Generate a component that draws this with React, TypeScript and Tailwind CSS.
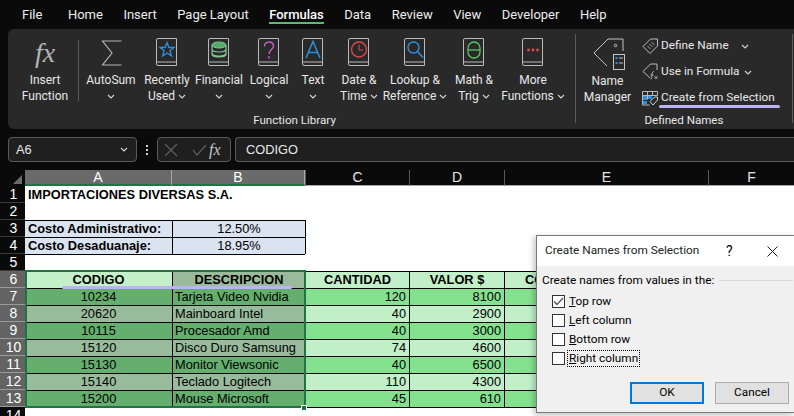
import type { ReactNode } from 'react';

const ui = 'font-["Roboto","Noto_Sans",sans-serif]';
const sheetFont = 'font-["Liberation_Sans",Arial,sans-serif]';

const tabs = ['Home', 'Insert', 'Page Layout', 'Formulas', 'Data', 'Review', 'View', 'Developer', 'Help'];

function Chevron({ className = '' }: { className?: string }) {
  return (
    <svg width="8" height="5" viewBox="0 0 8 5" className={className} fill="none" stroke="#d6d6d6" strokeWidth="1.1">
      <path d="M1 1l3 3 3-3" />
    </svg>
  );
}

function Book({ children }: { children: ReactNode }) {
  return (
    <svg width="22" height="29" viewBox="0 0 22 29" fill="none">
      <path d="M2 .5h18.500v27H2A1.500 1.500 0 0 1 .5 26V2A1.500 1.500 0 0 1 2 .5zM.8 24h19.700" stroke="#b9b9b9" />
      {children}
    </svg>
  );
}

const bookIcons: Record<string, ReactNode> = {
  recent: <path d="M11 4.500l1.900 5h5.100l-4.100 3.300 1.500 5.200-4.400-3-4.400 3 1.500-5.200L4 9.500h5.100z" stroke="#2f8fdc" strokeWidth="1.300" />,
  financial: (
    <>
      <ellipse cx="11" cy="7" rx="7" ry="3" fill="#55a868" stroke="#7fc98f" />
      <path d="M4 7v9c0 1.700 3 3 7 3s7-1.300 7-3V7M4 11c0 1.700 3 3 7 3s7-1.300 7-3M4 15c0 1.700 3 3 7 3s7-1.300 7-3" stroke="#7fc98f" strokeWidth="1.200" />
    </>
  ),
  logical: <path d="M6.500 8.500c0-6 9-6 9-.5 0 3.500-4.500 3.500-4.500 8M11 18v2.500" stroke="#c85fc8" strokeWidth="1.400" />,
  text: <path d="M4 20L11 3.500 18 20M6.500 14.500h9" stroke="#2f8fdc" strokeWidth="1.500" />,
  date: (
    <>
      <circle cx="11" cy="11.500" r="7.500" stroke="#e0494f" strokeWidth="1.300" />
      <path d="M11 6.500v5.500h4" stroke="#e0494f" />
    </>
  ),
  lookup: (
    <>
      <circle cx="9.500" cy="9.500" r="5.500" stroke="#2f8fdc" strokeWidth="1.400" />
      <path d="M13.500 13.500l5.500 6" stroke="#2f8fdc" strokeWidth="1.500" />
    </>
  ),
  math: (
    <>
      <rect x="5" y="4" width="12" height="16" rx="6" stroke="#58c468" strokeWidth="1.300" />
      <path d="M5 12h12" stroke="#58c468" strokeWidth="1.300" />
    </>
  ),
  more: (
    <>
      <circle cx="6.500" cy="12" r="1.400" fill="#e0494f" />
      <circle cx="11" cy="12" r="1.400" fill="#e0494f" />
      <circle cx="15.500" cy="12" r="1.400" fill="#e0494f" />
    </>
  ),
};

function RibbonButton({ width, icon, lines, caret }: { width: string; icon: ReactNode; lines: string[]; caret?: boolean }) {
  return (
    <div className={`${width} flex flex-col items-center text-[12px] leading-[16px] text-[#e8e8e8]`}>
      <div className="h-[29px] flex items-center justify-center">{icon}</div>
      <div className="mt-[5px] whitespace-nowrap">{lines[0]}</div>
      <div className="h-[16px] flex items-center gap-[3px] whitespace-nowrap">
        {lines[1]}
        {caret && <Chevron />}
      </div>
    </div>
  );
}

function TagIcon() {
  return (
    <svg width="17" height="17" viewBox="0 0 17 17" fill="none" stroke="#bdbdbd">
      <path d="M1 8.500L8.500 1H15.500V8L8 15.500z" />
      <path d="M5.500 8l3 3M7.500 6l3 3M9.500 4l3 3" strokeWidth=".8" />
    </svg>
  );
}

function FormulaTagIcon() {
  return (
    <svg width="17" height="18" viewBox="0 0 17 18" fill="none" stroke="#bdbdbd">
      <path d="M8 15L1 8.500 8.500 1H15V7" />
      <path d="M12.500 1.500v.01" />
      <path d="M8.500 16c1.500 0 1-1 1.500-5 .3-2 1-2.500 2-2.500M8.500 12h3M12.500 13l3 3M15.500 13l-3 3" strokeWidth=".9" />
    </svg>
  );
}

function SelectionIcon() {
  return (
    <svg width="16" height="15" viewBox="0 0 16 15" fill="none">
      <path d="M.5.5h15v4H.5zM.5 4.500v9.500h7" stroke="#b9b9b9" />
      <path d="M5.500.5v8M10.500.5v4" stroke="#b9b9b9" />
      <path d="M1 5h4v4H1z M1 10h4v3.500H1z M6 5h4v3H6z" fill="#2f8fdc" />
      <path d="M8 10.500L12.500 6h3v3L11 14z" fill="#292929" stroke="#d0d0d0" />
    </svg>
  );
}

function SmallCommand({ icon, children }: { icon: ReactNode; children: ReactNode }) {
  return (
    <div className="h-[26px] flex items-center">
      <div className="w-[22px] flex justify-center">{icon}</div>
      <div className="flex items-center text-[#e8e8e8] text-[11.800px] whitespace-nowrap">{children}</div>
    </div>
  );
}

function Ribbon() {
  return (
    <div className={`${ui} ml-[8px] h-[100px] rounded-l-[6px] bg-[#292929] flex pl-[6px]`}>
      <div className="w-[561px] flex flex-col">
        <div className="flex pt-[9px] h-[83px]">
          <RibbonButton
            width="w-[62px]"
            lines={['Insert', 'Function']}
            icon={<span className='font-["Liberation_Serif",serif] italic text-[28px] leading-none text-[#b4b4b4]'>fx</span>}
          />
          <div className="ml-[2px] mr-[5px] mt-[2px] w-px h-[61px] bg-[#5c5c5c]" />
          <RibbonButton
            width="w-[54px]"
            lines={['AutoSum', '']}
            caret
            icon={
              <svg width="21" height="26" viewBox="0 0 21 26" fill="none" stroke="#b4b4b4" strokeWidth="1.200">
                <path d="M20.500 1H1.500L11 13 1.500 25h19" />
              </svg>
            }
          />
          <RibbonButton width="w-[58px]" lines={['Recently', 'Used']} caret icon={<Book>{bookIcons.recent}</Book>} />
          <RibbonButton width="w-[46px]" lines={['Financial', '']} caret icon={<Book>{bookIcons.financial}</Book>} />
          <RibbonButton width="w-[54px]" lines={['Logical', '']} caret icon={<Book>{bookIcons.logical}</Book>} />
          <RibbonButton width="w-[34px]" lines={['Text', '']} caret icon={<Book>{bookIcons.text}</Book>} />
          <RibbonButton width="w-[58px]" lines={['Date &', 'Time']} caret icon={<Book>{bookIcons.date}</Book>} />
          <RibbonButton width="w-[54px]" lines={['Lookup &', 'Reference']} caret icon={<Book>{bookIcons.lookup}</Book>} />
          <RibbonButton width="w-[64px]" lines={['Math &', 'Trig']} caret icon={<Book>{bookIcons.math}</Book>} />
          <RibbonButton width="w-[54px]" lines={['More', 'Functions']} caret icon={<Book>{bookIcons.more}</Book>} />
        </div>
        <div className="text-center text-[11.600px] text-[#e8e8e8] leading-[16px]">Function Library</div>
      </div>
      <div className="w-px h-[89px] mt-[5px] bg-[#5c5c5c]" />
      <div className="w-[216px] flex flex-col">
        <div className="flex pt-[4px] h-[83px]">
          <div className="w-[63px] flex flex-col items-center text-[12px] leading-[16px] text-[#e8e8e8] pt-[5px]">
            <svg width="32" height="34" viewBox="0 0 32 34" fill="none" stroke="#c4c4c4" className="ml-[2px]">
              <path d="M14 28L1 15 15 1H30V13" />
              <circle cx="22.500" cy="7.500" r="1.200" />
              <rect x="20.500" y="16.500" width="11" height="15" />
              <path d="M22.500 20h2M22.500 25h2" stroke="#2f8fdc" strokeWidth="2" />
              <path d="M26 20h4M26 25h4" />
            </svg>
            <div className="mt-[1px]">Name</div>
            <div>Manager</div>
          </div>
          <div className="flex flex-col">
            <SmallCommand icon={<TagIcon />}>
              Define Name
              <Chevron className="ml-[12px]" />
            </SmallCommand>
            <SmallCommand icon={<FormulaTagIcon />}>
              Use in Formula
              <Chevron className="ml-[4px]" />
            </SmallCommand>
            <SmallCommand icon={<SelectionIcon />}>Create from Selection</SmallCommand>
          </div>
        </div>
        <div className="text-center text-[11.600px] text-[#e8e8e8] leading-[16px]">Defined Names</div>
      </div>
      <div className="w-px h-[89px] mt-[5px] bg-[#5c5c5c]" />
    </div>
  );
}

function FormulaBar() {
  return (
    <div className={`${sheetFont} mt-[8px] ml-[8px] h-[25px] flex items-center text-[12.800px] text-[#e8e8e8]`}>
      <div className="w-[129px] h-[25px] rounded-[4px] border border-[#5a5a5a] bg-[#1f1f1f] flex items-center justify-between pl-[7px] pr-[8px]">
        <span>A6</span>
        <Chevron />
      </div>
      <div className="w-[20px] flex flex-col items-center gap-[2px]">
        <span className="w-[2px] h-[2px] bg-[#d0d0d0]" />
        <span className="w-[2px] h-[2px] bg-[#d0d0d0]" />
        <span className="w-[2px] h-[2px] bg-[#d0d0d0]" />
      </div>
      <div className="w-[74px] h-[25px] rounded-[4px] border border-[#5a5a5a] bg-[#1f1f1f] flex items-center pl-[6px]">
        <svg width="44" height="14" viewBox="0 0 44 14" fill="none" stroke="#5f5f5f" strokeWidth="1.200">
          <path d="M1 1l12 12M13 1L1 13M29 7l4 5 9-10" />
        </svg>
        <span className='font-["Liberation_Serif",serif] italic text-[16px] text-[#c8c8c8] ml-[1px]'>fx</span>
      </div>
      <div className="ml-[4px] flex-1 h-[25px] rounded-l-[4px] border border-r-0 border-[#5a5a5a] bg-[#1f1f1f] flex items-center pl-[10px]">
        CODIGO
      </div>
    </div>
  );
}

const products = [
  ['10234', 'Tarjeta Video Nvidia', '120', '8100'],
  ['20620', 'Mainboard Intel', '40', '2900'],
  ['10115', 'Procesador Amd', '40', '3000'],
  ['15120', 'Disco Duro Samsung', '74', '4600'],
  ['15130', 'Monitor Viewsonic', '40', '6500'],
  ['15140', 'Teclado Logitech', '110', '4300'],
  ['15200', 'Mouse Microsoft', '45', '610'],
];

function RowHead({ n, selected }: { n: number; selected?: boolean }) {
  return (
    <div
      className={`flex items-center justify-center pl-[2px] text-[14px] text-white border-b ${
        selected ? 'bg-[#636363] border-[#9a9a9a]' : 'bg-[#0a0a0a] border-[#3a3a3a]'
      }`}
    >
      {n}
    </div>
  );
}

function Cell({ className = '', children }: { className?: string; children?: ReactNode }) {
  return <div className={`flex items-center overflow-visible whitespace-nowrap text-[12.800px] text-black ${className}`}>{children}</div>;
}

function Sheet() {
  return (
    <div className={`${sheetFont} relative mt-[8px] bg-white h-[246px] overflow-hidden grid grid-cols-[25px_147px_133px_104px_95px_204px_86px] grid-rows-[16px_repeat(14,17px)]`}>
      <div className="bg-[#0a0a0a] relative">
        <div className="absolute right-[3px] bottom-[2px] w-0 h-0 border-l-[9px] border-l-transparent border-b-[9px] border-b-[#6a6a6a]" />
      </div>
      <div className="bg-[#6a6a6a] border-r border-[#a8a8a8] border-b-2 border-b-[#217346] text-white text-[14px] flex items-center justify-center">A</div>
      <div className="bg-[#6a6a6a] border-r border-[#a8a8a8] border-b-2 border-b-[#217346] text-white text-[14px] flex items-center justify-center">B</div>
      {['C', 'D', 'E', 'F'].map((c) => (
        <div key={c} className="bg-[#0a0a0a] border-l border-[#5a5a5a] border-b border-b-[#a8a8a8] text-[#e6e6e6] text-[14px] flex items-center justify-center">
          {c}
        </div>
      ))}

      <RowHead n={1} />
      <Cell className="col-span-6 pl-[3px] font-bold">IMPORTACIONES DIVERSAS S.A.</Cell>
      <RowHead n={2} />
      <Cell className="col-span-6" />

      <RowHead n={3} />
      <Cell className="pl-[3px] font-bold bg-[#dae3f0] border-t border-black">Costo Administrativo:</Cell>
      <Cell className="justify-center bg-[#dae3f0] border-t border-l border-black">12.50%</Cell>
      <Cell className="col-span-4 border-l border-black" />
      <RowHead n={4} />
      <Cell className="pl-[3px] font-bold bg-[#dae3f0] border-t border-black">Costo Desaduanaje:</Cell>
      <Cell className="justify-center bg-[#dae3f0] border-t border-l border-black">18.95%</Cell>
      <Cell className="col-span-4 border-l border-black" />
      <RowHead n={5} />
      <Cell className="border-t border-black" />
      <Cell className="border-t border-black" />
      <Cell className="col-span-4" />

      <RowHead n={6} selected />
      <Cell className="justify-center font-bold bg-[#c3efc9] border-t border-black">CODIGO</Cell>
      <Cell className="justify-center font-bold bg-[#9abb9b] border-t border-l border-black">DESCRIPCION</Cell>
      <Cell className="justify-center font-bold bg-[#c1efc8] border-t border-l border-black">CANTIDAD</Cell>
      <Cell className="justify-center font-bold bg-[#c1efc8] border-t border-l border-black">VALOR $</Cell>
      <Cell className="pl-[20px] font-bold bg-[#c1efc8] border-t border-l border-black">COSTO</Cell>
      <Cell />

      {products.map((p, i) => {
        const odd = i % 2 === 0;
        return [
          <RowHead key={`h${i}`} n={i + 7} selected />,
          <Cell key={`a${i}`} className={`justify-center border-t border-black ${odd ? 'bg-[#64ae6e]' : 'bg-[#98bb9b]'}`}>
            {p[0]}
          </Cell>,
          <Cell key={`b${i}`} className={`pl-[2px] border-t border-l border-black ${odd ? 'bg-[#64ae6e]' : 'bg-[#98bb9b]'}`}>
            {p[1]}
          </Cell>,
          <Cell key={`c${i}`} className={`justify-end pr-[3px] border-t border-l border-black ${odd ? 'bg-[#84e28f]' : 'bg-[#c1efc8]'}`}>
            {p[2]}
          </Cell>,
          <Cell key={`d${i}`} className={`justify-end pr-[3px] border-t border-l border-black ${odd ? 'bg-[#84e28f]' : 'bg-[#c1efc8]'}`}>
            {p[3]}
          </Cell>,
          <Cell key={`e${i}`} className={`border-t border-l border-black ${odd ? 'bg-[#84e28f]' : 'bg-[#c1efc8]'}`} />,
          <Cell key={`f${i}`} />,
        ];
      })}

      <RowHead n={14} />
      <Cell className="border-t border-black" />
      <Cell className="border-t border-black" />
      <Cell className="border-t border-black" />
      <Cell className="border-t border-black" />
      <Cell className="border-t border-black" />
      <Cell />

      {/* selection box and the purple annotation stroke */}
      <div className="absolute left-[25px] top-[100px] w-[281px] h-[138px] border-2 border-[#217346]" />
      <div className="absolute left-[301px] top-[235px] w-[6px] h-[6px] bg-[#217346] border border-white" />
      <div className="absolute left-[62px] top-[116px] w-[230px] h-[3px] rounded-full bg-[#bdb2f5]" />
    </div>
  );
}

function Check({ label, rest, checked, focus }: { label: string; rest: string; checked?: boolean; focus?: boolean }) {
  return (
    <div className="h-[19px] flex items-center">
      <div className="w-[13px] h-[13px] border border-[#333] bg-white flex items-center justify-center">
        {checked && (
          <svg width="11" height="9" viewBox="0 0 11 9" fill="none" stroke="#555" strokeWidth="1.300">
            <path d="M1 4.500l3 3 6-6.500" />
          </svg>
        )}
      </div>
      <div className={`ml-[3px] px-[1px] leading-[15px] ${focus ? 'outline-1 outline-dotted outline-black' : ''}`}>
        <span className="underline">{label}</span>
        {rest}
      </div>
    </div>
  );
}

function Dialog() {
  return (
    <div className={`${ui} absolute left-[536px] top-[235px] w-[259px] h-[178px] border border-[#7a7a7a] bg-[#f0f0f0] text-[11.800px] text-black shadow-[-2px_2px_6px_rgba(0,0,0,0.25)] flex flex-col`}>
      <div className="h-[30px] bg-white flex items-center pl-[8px] shrink-0">
        <span className="w-[181px] whitespace-nowrap text-[#222]">Create Names from Selection</span>
        <span className="text-[14px]">?</span>
        <svg width="11" height="11" viewBox="0 0 11 11" fill="none" stroke="#222" className="ml-[34px]">
          <path d="M.5.5l10 10M10.500.5l-10 10" />
        </svg>
      </div>
      <div className="mt-[6px] pl-[5px] flex items-center whitespace-nowrap">
        <span>Create names from values in the:</span>
        <span className="ml-[5px] w-[74px] h-px bg-[#d8d8d8]" />
      </div>
      <div className="mt-[2px] pl-[15px] flex flex-col">
        <Check label="T" rest="op row" checked />
        <Check label="L" rest="eft column" />
        <Check label="B" rest="ottom row" />
        <Check label="R" rest="ight column" focus />
      </div>
      <div className="mt-[14px] pl-[93px] flex gap-[11px]">
        <div className="w-[74px] h-[22px] flex items-center justify-center bg-[#e1e1e1] border-2 border-[#0078d7]">OK</div>
        <div className="w-[74px] h-[22px] flex items-center justify-center bg-[#e1e1e1] border border-[#adadad]">Cancel</div>
      </div>
    </div>
  );
}

export default function App() {
  return (
    <div className="relative w-[794px] h-[416px] overflow-hidden bg-[#0a0a0a]">
      <div className={`${ui} h-[29px] flex items-center pl-[22px] gap-[20.500px] text-[13px] text-[#ededed]`}>
        <span className="mr-[5px]">File</span>
        {tabs.map((t) =>
          t === 'Formulas' ? (
            <span key={t} className="relative font-medium text-white">
              {t}
              <span className="absolute left-0 right-0 top-[17px] h-[2px] bg-[#5fb97a]" />
            </span>
          ) : (
            <span key={t}>{t}</span>
          ),
        )}
      </div>
      <Ribbon />
      <FormulaBar />
      <Sheet />
      <Dialog />
      <div className="absolute left-[659px] top-[105px] w-[121px] h-[3px] rounded-full bg-[#bdb2f5]" />
    </div>
  );
}
